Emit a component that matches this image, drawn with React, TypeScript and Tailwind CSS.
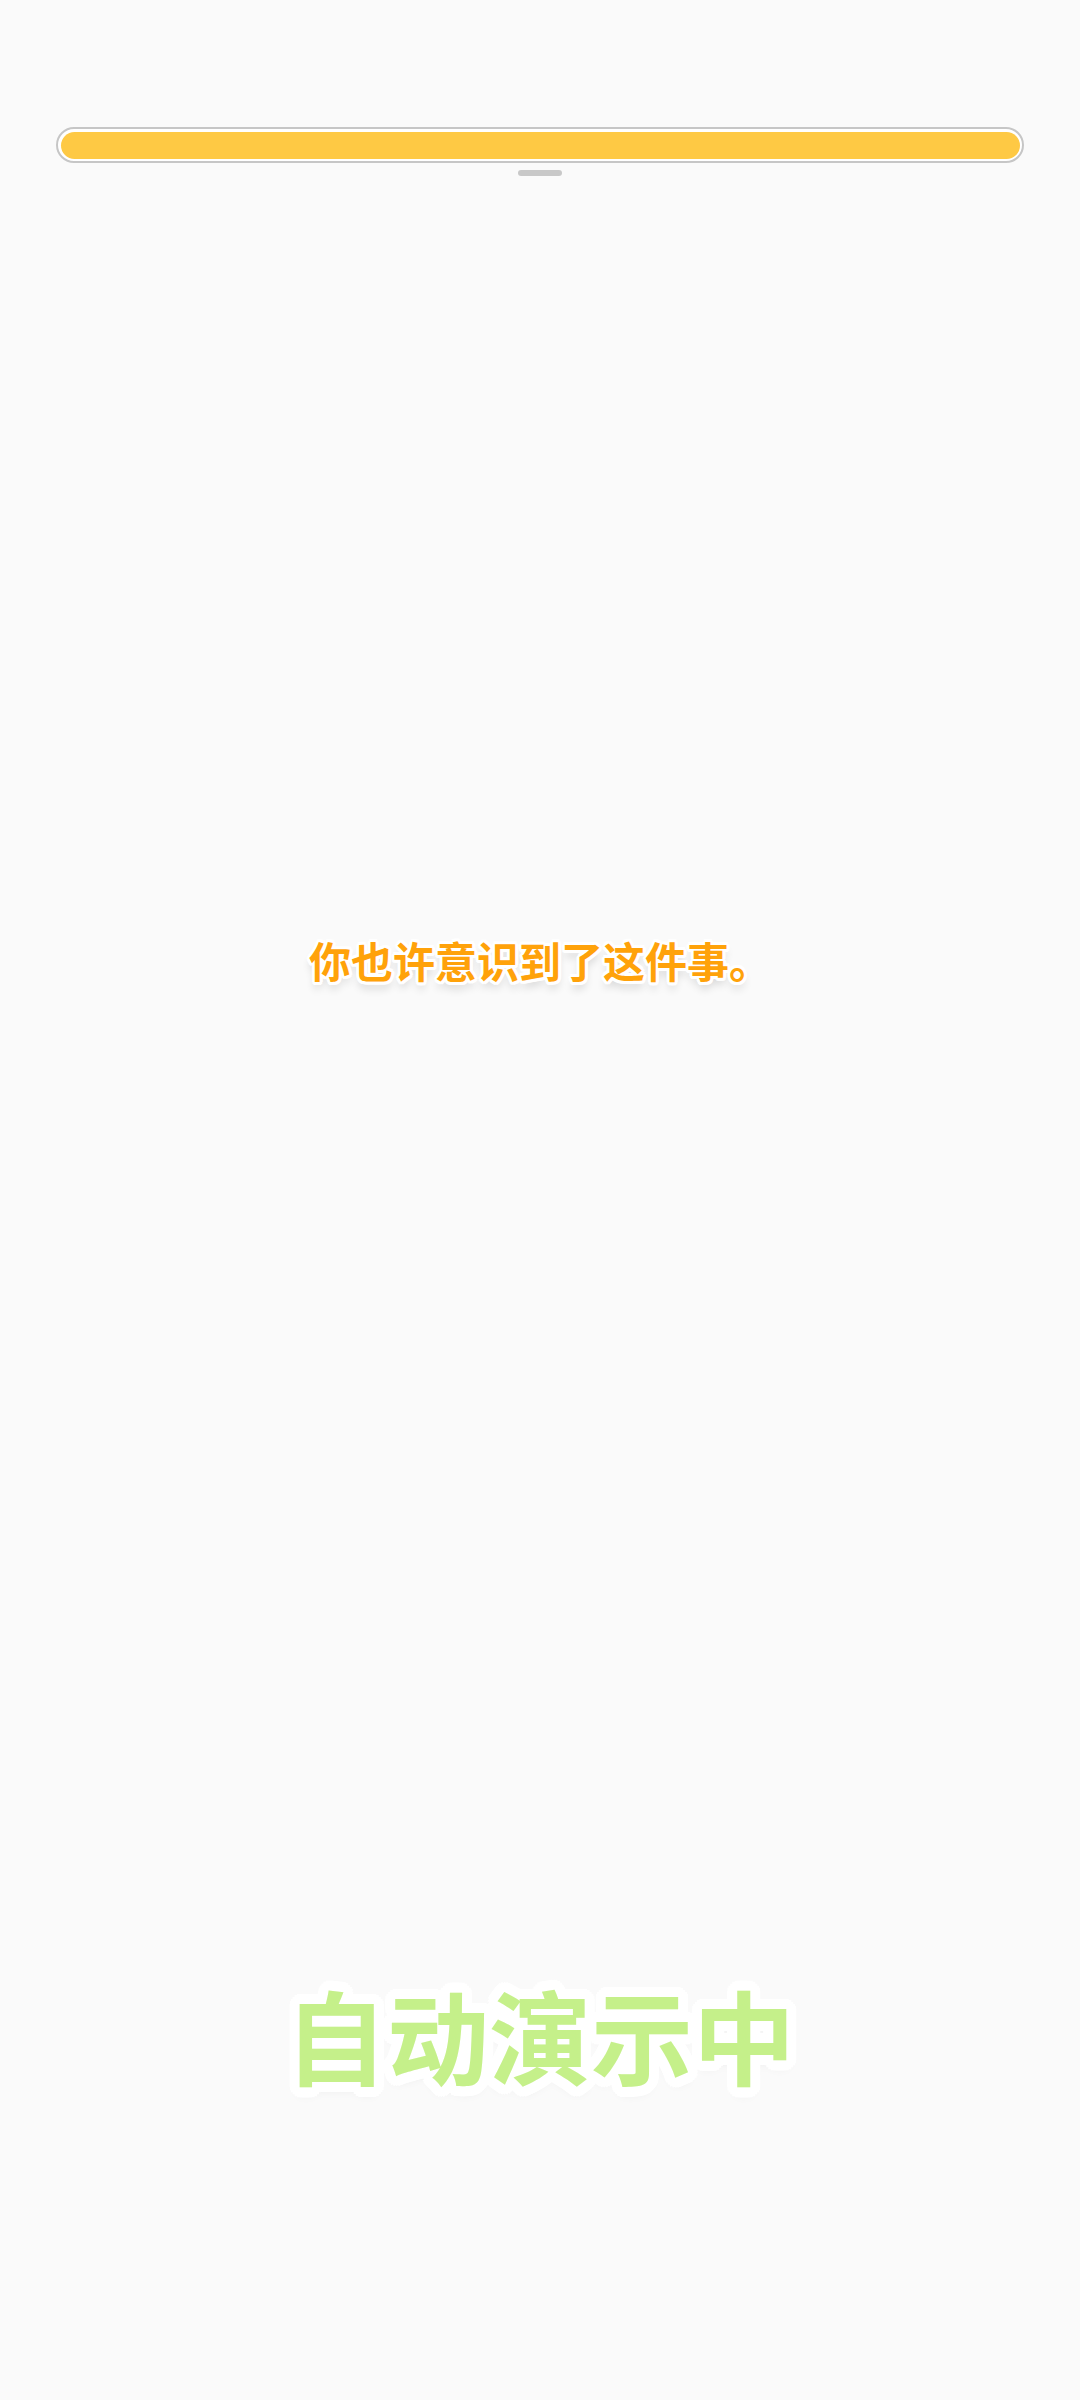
import React from "react";

function outline(r: number, color: string, steps: number, extra: string) {
  const parts: string[] = [];
  for (let i = 0; i < steps; i++) {
    const a = (i / steps) * Math.PI * 2;
    const x = (Math.cos(a) * r).toFixed(2);
    const y = (Math.sin(a) * r).toFixed(2);
    parts.push(`${x}px ${y}px 0 ${color}`);
  }
  for (let i = 0; i < steps; i++) {
    const a = (i / steps) * Math.PI * 2;
    const x = (Math.cos(a) * r * 0.55).toFixed(2);
    const y = (Math.sin(a) * r * 0.55).toFixed(2);
    parts.push(`${x}px ${y}px 0 ${color}`);
  }
  parts.push(extra);
  return parts.join(", ");
}

export default function App() {
  return (
    <div
      className="w-full h-[2400px] bg-[#fafafa] flex flex-col items-center overflow-hidden"
      style={{ fontFamily: '"Noto Sans CJK SC", "Noto Sans", sans-serif' }}
    >
      <div className="mt-[127px] w-[968px] h-[36px] rounded-full border-[2.5px] border-[#c6c6c6] bg-white p-[2.5px]">
        <div className="w-full h-full rounded-full bg-[#fec944]" />
      </div>
      <div className="mt-[7px] w-[44px] h-[6px] rounded-full bg-[#c8c8c8]" />

      <div
        className="mt-[763px] text-[42px] leading-[42px] font-bold text-[#ffa20a]"
        style={{ textShadow: outline(3, "#ffffff", 12, "0 7px 8px rgba(0,0,0,0.16)") }}
      >
        你也许意识到了这件事。
      </div>

      <div
        className="mt-[1002px] text-[102px] leading-[102px] font-bold text-[#c5f08a]"
        style={{ textShadow: outline(10, "#ffffff", 24, "0 6px 12px rgba(0,0,0,0.10)") }}
      >
        自动演示中
      </div>
    </div>
  );
}
